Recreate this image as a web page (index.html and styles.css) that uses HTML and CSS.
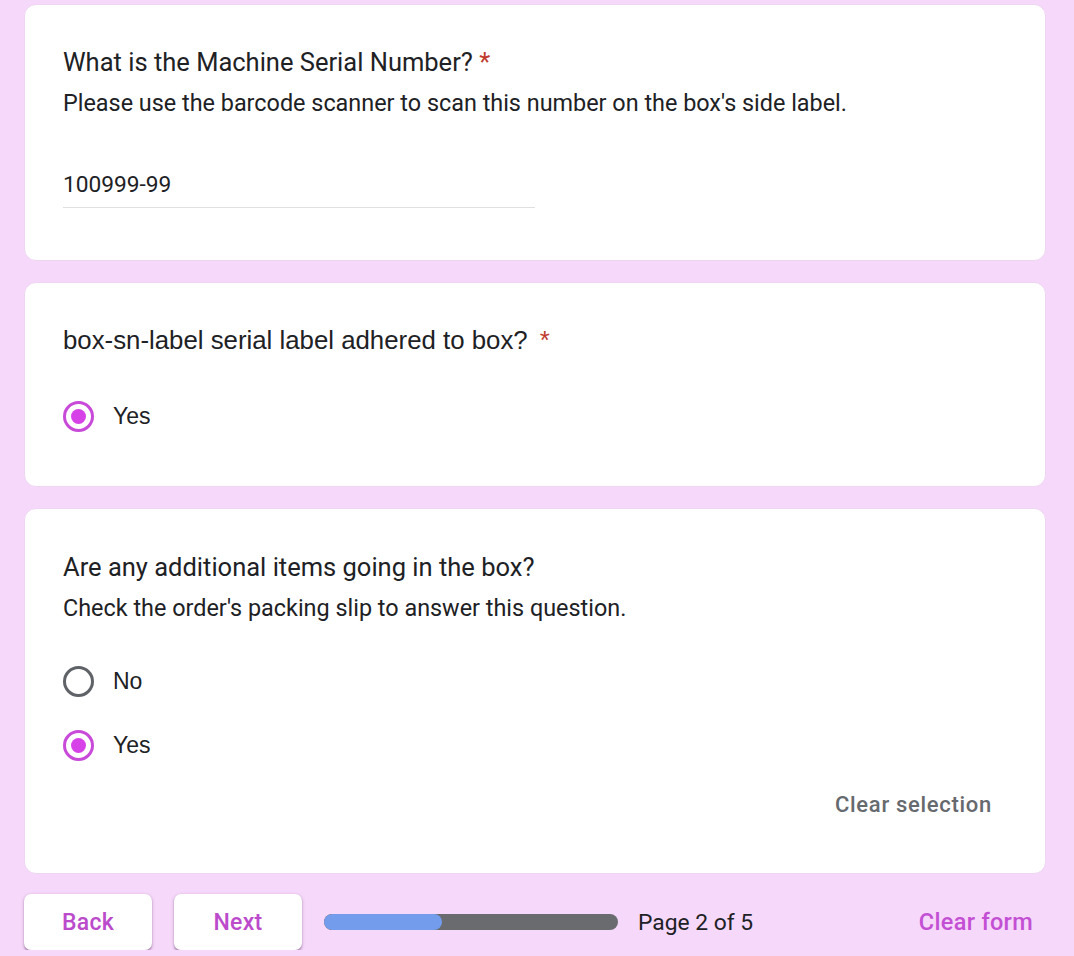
FILE: index.html
```html
<!DOCTYPE html>
<html lang="en">
<head>
<meta charset="utf-8">
<title>Form</title>
<link rel="stylesheet" href="styles.css">
</head>
<body>
<div class="page">
  <section class="card card-1">
    <div class="q-title">What is the Machine Serial Number? <span class="req">*</span></div>
    <div class="q-desc">Please use the barcode scanner to scan this number on the box's side label.</div>
    <div class="answer">100999-99</div>
  </section>

  <section class="card card-2">
    <div class="q-title arial">box-sn-label serial label adhered to box? <span class="req">*</span></div>
    <div class="options options-2">
      <div class="option"><span class="radio checked"></span><span class="opt-label">Yes</span></div>
    </div>
  </section>

  <section class="card card-3">
    <div class="q-title">Are any additional items going in the box?</div>
    <div class="q-desc">Check the order's packing slip to answer this question.</div>
    <div class="options options-3">
      <div class="option"><span class="radio"></span><span class="opt-label">No</span></div>
      <div class="option"><span class="radio checked"></span><span class="opt-label">Yes</span></div>
    </div>
    <div class="clear-row"><span class="clear-sel">Clear selection</span></div>
  </section>

  <div class="footer">
    <button class="btn btn-back">Back</button>
    <button class="btn btn-next">Next</button>
    <div class="progress"><div class="progress-fill" style="width:40%"></div></div>
    <span class="page-of">Page 2 of 5</span>
    <span class="clear-form">Clear form</span>
  </div>
</div>
</body>
</html>
```
FILE: styles.css
```css
html, body {
  margin: 0;
  padding: 0;
  background: #f6d8fa;
}
body {
  font-family: Roboto, "Liberation Sans", Arial, sans-serif;
  color: #202124;
}
.page {
  width: 1022px;
  padding: 4px 0 0 24px;
}
.card {
  background: #fff;
  border: 1px solid #eed6f2;
  border-radius: 12px;
  padding: 0 52px 0 38px;
  box-sizing: border-box;
}
.card-1 { height: 257px; padding-top: 43px; }
.card-2 { height: 205px; margin-top: 21px; padding-top: 43px; }
.card-3 { height: 366px; margin-top: 21px; padding-top: 44px; }

.q-title {
  font-size: 25.5px;
  line-height: 30px;
  margin-top: -1px;
  color: #202124;
}
.q-title.arial {
  font-family: "Liberation Sans", Arial, sans-serif;
  font-size: 25.8px;
}
.req { color: #c0392b; }
.arial .req { margin-left: 5px; }
.q-desc {
  margin-top: 12px;
  font-size: 23.4px;
  line-height: 28px;
  color: #202124;
}
.answer {
  margin-top: 54px;
  width: 472px;
  font-size: 22.7px;
  line-height: 28px;
  padding-bottom: 8px;
  border-bottom: 1px solid #e0e0e0;
}
.options-2 { margin-top: 45px; }
.options-3 { margin-top: 43px; }
.option {
  display: flex;
  align-items: center;
  height: 32px;
}
.option + .option { margin-top: 32px; }
.radio {
  width: 31px;
  height: 31px;
  box-sizing: border-box;
  border: 3px solid #5f6368;
  border-radius: 50%;
  display: flex;
  align-items: center;
  justify-content: center;
  flex: none;
}
.radio.checked { border-color: #c84ad8; }
.radio.checked::after {
  content: "";
  width: 15px;
  height: 15px;
  border-radius: 50%;
  background: #d641e8;
}
.opt-label {
  margin-left: 19px;
  font-family: "Liberation Sans", Arial, sans-serif;
  font-size: 23px;
  color: #202124;
}
.clear-row {
  margin-top: 30px;
  display: flex;
  justify-content: flex-end;
  padding-right: 1px;
}
.clear-sel {
  font-size: 22px;
  line-height: 28px;
  font-weight: 500;
  color: #66696e;
  letter-spacing: 0.7px;
}
.footer {
  margin-top: 20px;
  display: flex;
  align-items: center;
  height: 56px;
}
.btn {
  width: 128px;
  height: 56px;
  border: none;
  border-radius: 7px;
  background: #fff;
  box-shadow: 0 1.5px 2px rgba(90, 50, 100, 0.45), 0 1px 4px rgba(90, 50, 100, 0.15);
  font-family: Roboto, Arial, sans-serif;
  font-size: 23px;
  font-weight: 500;
  color: #bb4bcb;
  padding: 0;
  margin-right: 22px;
  letter-spacing: 0.3px;
}
.progress {
  width: 294px;
  height: 16px;
  border-radius: 8px;
  background: #696b6f;
  overflow: hidden;
}
.progress-fill {
  height: 100%;
  background: #739cec;
  border-radius: 8px;
}
.page-of {
  margin-left: 20px;
  font-size: 22.8px;
  color: #202124;
}
.clear-form {
  margin-left: auto;
  margin-right: 13px;
  font-size: 23.5px;
  font-weight: 500;
  color: #c34fd4;
  letter-spacing: 0.3px;
}
```
